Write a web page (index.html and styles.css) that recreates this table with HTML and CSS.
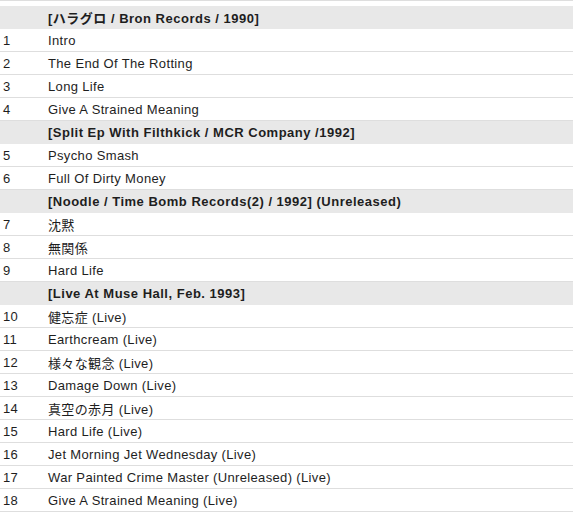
FILE: index.html
```html
<!DOCTYPE html>
<html>
<head>
<meta charset="utf-8">
<link rel="stylesheet" href="styles.css">
</head>
<body>
<div class="top-line"></div>
<div class="list">
  <div class="row head"><span class="num"></span><span class="title">[ハラグロ / Bron Records / 1990]</span></div>
  <div class="row"><span class="num">1</span><span class="title">Intro</span></div>
  <div class="row"><span class="num">2</span><span class="title">The End Of The Rotting</span></div>
  <div class="row"><span class="num">3</span><span class="title">Long Life</span></div>
  <div class="row"><span class="num">4</span><span class="title">Give A Strained Meaning</span></div>
  <div class="row head"><span class="num"></span><span class="title">[Split Ep With Filthkick / MCR Company /1992]</span></div>
  <div class="row"><span class="num">5</span><span class="title">Psycho Smash</span></div>
  <div class="row"><span class="num">6</span><span class="title">Full Of Dirty Money</span></div>
  <div class="row head"><span class="num"></span><span class="title">[Noodle / Time Bomb Records(2) / 1992] (Unreleased)</span></div>
  <div class="row"><span class="num">7</span><span class="title">沈黙</span></div>
  <div class="row"><span class="num">8</span><span class="title">無関係</span></div>
  <div class="row"><span class="num">9</span><span class="title">Hard Life</span></div>
  <div class="row head"><span class="num"></span><span class="title">[Live At Muse Hall, Feb. 1993]</span></div>
  <div class="row"><span class="num">10</span><span class="title">健忘症 (Live)</span></div>
  <div class="row"><span class="num">11</span><span class="title">Earthcream (Live)</span></div>
  <div class="row"><span class="num">12</span><span class="title">様々な観念 (Live)</span></div>
  <div class="row"><span class="num">13</span><span class="title">Damage Down (Live)</span></div>
  <div class="row"><span class="num">14</span><span class="title">真空の赤月 (Live)</span></div>
  <div class="row"><span class="num">15</span><span class="title">Hard Life (Live)</span></div>
  <div class="row"><span class="num">16</span><span class="title">Jet Morning Jet Wednesday (Live)</span></div>
  <div class="row"><span class="num">17</span><span class="title">War Painted Crime Master (Unreleased) (Live)</span></div>
  <div class="row"><span class="num">18</span><span class="title">Give A Strained Meaning (Live)</span></div>
</div>
</body>
</html>
```

FILE: styles.css
```css
html, body {
  margin: 0;
  padding: 0;
  background: #ffffff;
}
body {
  font-family: "Liberation Sans", "Noto Sans CJK JP", sans-serif;
  font-size: 13px;
  color: #1e1e1e;
}
.top-line {
  height: 1px;
  background: #dedede;
  width: 573px;
  margin-bottom: 5px;
}
.list {
  width: 573px;
  display: flex;
  flex-direction: column;
}
.row {
  display: grid;
  grid-template-columns: 45px 1fr;
  height: 22px;
  align-items: center;
  border-bottom: 1px solid #dedede;
  letter-spacing: 0.35px;
}
.row.head {
  background: #e8e8e8;
  font-weight: bold;
  border-bottom-color: #e8e8e8;
  letter-spacing: 0.5px;
}
.num {
  padding-left: 3px;
}
.title {
  padding-left: 3px;
  white-space: nowrap;
}
```
